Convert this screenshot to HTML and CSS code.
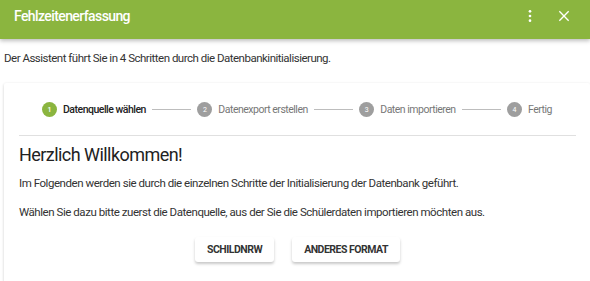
FILE: index.html
```html
<!DOCTYPE html>
<html lang="de">
<head>
    <meta charset="UTF-8">
    <title>Fehlzeitenerfassung</title>
    <link rel="stylesheet" href="styles.css">
</head>
<body>
    <header class="toolbar">
        <span class="toolbar-title">Fehlzeitenerfassung</span>
        <div class="toolbar-actions">
            <button class="icon-btn" aria-label="Menü">
                <svg width="16" height="16" viewBox="0 0 24 24"><circle cx="12" cy="5" r="2" fill="#fff"/><circle cx="12" cy="12" r="2" fill="#fff"/><circle cx="12" cy="19" r="2" fill="#fff"/></svg>
            </button>
            <button class="icon-btn" aria-label="Schließen">
                <svg width="16" height="16" viewBox="0 0 24 24"><path d="M5 5 L19 19 M19 5 L5 19" stroke="#fff" stroke-width="2"/></svg>
            </button>
        </div>
    </header>
    <p class="intro">Der Assistent führt Sie in 4 Schritten durch die Datenbankinitialisierung.</p>
    <section class="card">
        <div class="stepper">
            <div class="step active"><span class="step-num">1</span><span class="step-label">Datenquelle wählen</span></div>
            <div class="step-line"></div>
            <div class="step"><span class="step-num">2</span><span class="step-label">Datenexport erstellen</span></div>
            <div class="step-line"></div>
            <div class="step"><span class="step-num">3</span><span class="step-label">Daten importieren</span></div>
            <div class="step-line"></div>
            <div class="step"><span class="step-num">4</span><span class="step-label">Fertig</span></div>
        </div>
        <div class="content">
            <h2>Herzlich Willkommen!</h2>
            <p>Im Folgenden werden sie durch die einzelnen Schritte der Initialisierung der Datenbank geführt.</p>
            <p>Wählen Sie dazu bitte zuerst die Datenquelle, aus der Sie die Schülerdaten importieren möchten aus.</p>
            <div class="actions">
                <button class="btn">SchildNRW</button>
                <button class="btn">Anderes Format</button>
            </div>
        </div>
    </section>
</body>
</html>
```

FILE: styles.css
```css
body {
    margin: 0;
    font-family: Roboto, 'Liberation Sans', sans-serif;
    color: #333;
    background: #fff;
    overflow: hidden;
}
.toolbar {
    height: 39px;
    background-color: #8bb53f;
    color: #fff;
    display: flex;
    align-items: center;
    justify-content: space-between;
    padding: 0 14px;
    box-shadow: 0 2px 4px rgba(0, 0, 0, 0.25);
    position: relative;
}
.toolbar-title {
    font-size: 14px;
    font-weight: 500;
    letter-spacing: -0.6px;
    margin-top: -8px;
}
.toolbar-actions {
    display: flex;
    gap: 18px;
    margin-top: -8px;
    margin-right: 4px;
}
.icon-btn {
    background: none;
    border: none;
    padding: 0;
    display: flex;
    cursor: pointer;
}
.intro {
    margin: 12px 4px 0;
    font-size: 11.5px;
    letter-spacing: -0.5px;
}
.card {
    margin: 18px 0 0 4px;
    padding: 0 14px 0 15px;
    box-shadow: 0 1px 3px rgba(0, 0, 0, 0.2);
    border-radius: 2px;
    min-height: 200px;
}
.stepper {
    display: flex;
    align-items: center;
    padding: 19px 24px 18px 23px;
    border-bottom: 1px solid #e0e0e0;
}
.step {
    display: flex;
    align-items: center;
    gap: 6px;
    font-size: 10.5px;
    letter-spacing: -0.5px;
    color: #777;
}
.step.active {
    color: #222;
    font-weight: 500;
}
.step-num {
    width: 15px;
    height: 15px;
    border-radius: 50%;
    background: #9e9e9e;
    color: #fff;
    font-size: 7px;
    letter-spacing: 0;
    display: flex;
    align-items: center;
    justify-content: center;
}
.step.active .step-num {
    background: #8bb53f;
}
.step-line {
    flex: 1;
    height: 1px;
    background: #bdbdbd;
    margin: 0 6px;
}
.content h2 {
    font-size: 18px;
    font-weight: 400;
    letter-spacing: -0.55px;
    color: #222;
    margin: 8px 0 11px;
}
.content p {
    font-size: 11.5px;
    letter-spacing: -0.45px;
    margin: 0 0 15px;
}
.actions {
    display: flex;
    justify-content: center;
    gap: 18px;
    margin-top: 18px;
}
.btn {
    font-family: inherit;
    font-size: 10.5px;
    font-weight: 700;
    letter-spacing: -0.5px;
    text-transform: uppercase;
    color: #333;
    background: #fff;
    border: none;
    border-radius: 3px;
    padding: 0 12px;
    height: 25px;
    box-shadow: 0 2px 3px rgba(0, 0, 0, 0.22);
}
```
